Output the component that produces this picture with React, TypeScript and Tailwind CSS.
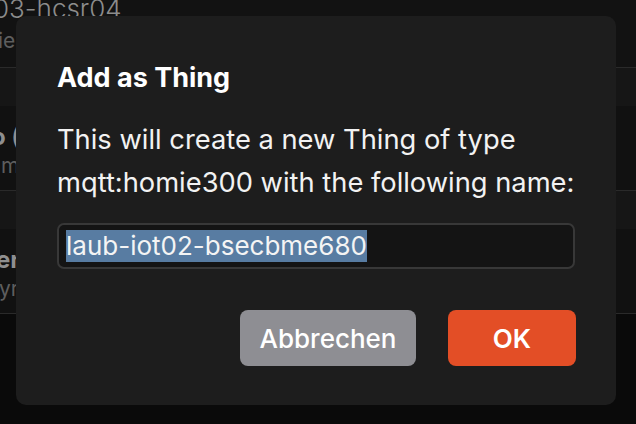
import React from "react";

const font = { fontFamily: "Inter, 'Noto Sans', sans-serif" };

function BgItem({ title, sub, bold, tShift, sShift }: { title: string; sub: string; bold?: boolean; tShift: string; sShift: string }) {
  return (
    <div className="flex flex-col">
      <div className="h-[38px] bg-[#161616]" />
      <div className="h-[84px] bg-[#111111] pt-[17px] flex flex-col">
        <div className={`text-[24px] leading-[28px] whitespace-nowrap text-[#8f8f8f] ${bold ? "font-bold" : "font-light"} ${tShift}`}>{title}</div>
        <div className={`text-[21px] leading-[26px] whitespace-nowrap text-[#5e5e5e] mt-[2px] ${sShift}`}>{sub}</div>
      </div>
      <div className="h-px bg-[#2a2a2a]" />
    </div>
  );
}

export default function App() {
  return (
    <div className="relative w-[636px] h-[424px] overflow-hidden bg-[#0a0a0a]" style={font}>
      <div className="flex flex-col">
        <div className="h-[67px] bg-[#121212] flex flex-col">
          <div className="text-[26px] font-light leading-[26px] -mt-[4px] -ml-[7px] whitespace-nowrap text-[#8c8c8c]">03-hcsr04</div>
          <div className="text-[21px] leading-[26px] mt-[6px] -ml-[2px] whitespace-nowrap text-[#5e5e5e]">ie</div>
        </div>
        <div className="h-px bg-[#2a2a2a]" />
        <BgItem title="o (" sub="m" bold tShift="-ml-[9px]" sShift="ml-[1px]" />
        <BgItem title="er" sub="yr" bold tShift="-ml-[4px]" sShift="-ml-[1px]" />
      </div>

      <div className="absolute left-[16px] top-[16px] w-[600px] h-[389px] rounded-[10px] bg-[#1d1d1d] pl-[41px] pr-[40px] pt-[45px] flex flex-col">
        <div className="text-[27px] leading-[33px] font-bold text-white whitespace-nowrap">Add as Thing</div>
        <div className="mt-[24px] text-[27.3px] leading-[43px] text-[#f2f2f2] whitespace-nowrap">
          This will create a new Thing of type
          <br />
          mqtt:homie300 with the following name:
        </div>
        <div className="mt-[19px] h-[46px] w-[518px] rounded-[7px] border-2 border-[#383838] bg-[#141414] flex items-center pl-[7px]">
          <span className="bg-[#587ca2] text-[26px] leading-[32px] text-[#f4f4f4] whitespace-nowrap">laub-iot02-bsecbme680</span>
        </div>
        <div className="mt-[41px] flex justify-end gap-[32px]">
          <div className="w-[176px] h-[56px] rounded-[8px] bg-[#8e8e93] flex items-center justify-center text-[26px] font-medium text-white">Abbrechen</div>
          <div className="w-[128px] h-[56px] rounded-[8px] bg-[#e34e26] flex items-center justify-center text-[26px] font-semibold text-white">OK</div>
        </div>
      </div>
    </div>
  );
}
